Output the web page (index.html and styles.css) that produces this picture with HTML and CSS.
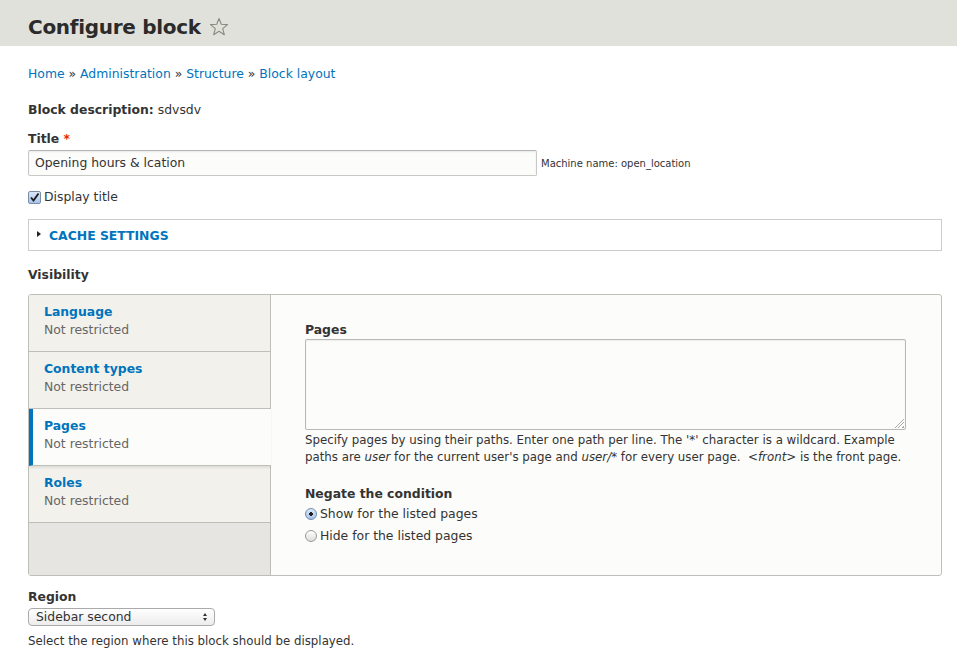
FILE: index.html
```html
<!DOCTYPE html>
<html>
<head>
<meta charset="utf-8">
<link rel="stylesheet" href="styles.css">
</head>
<body>
<header class="page-head">
  <h1 class="page-title">Configure block</h1>
  <svg class="star" width="20" height="20" viewBox="0 0 20 20"><path d="M10 1.5 L12.3 7.3 L18.5 7.6 L13.7 11.6 L15.3 17.7 L10 14.3 L4.7 17.7 L6.3 11.6 L1.5 7.6 L7.7 7.3 Z" fill="none" stroke="#8a8a80" stroke-width="1.1" stroke-linejoin="round"/></svg>
</header>
<main class="content">
  <nav class="breadcrumb"><a href="#">Home</a> » <a href="#">Administration</a> » <a href="#">Structure</a> » <a href="#">Block layout</a></nav>

  <div class="item"><span class="bold">Block description:</span> sdvsdv</div>

  <div class="field">
    <label class="label">Title <span class="req">*</span></label>
    <div class="title-row">
      <div class="text-input">Opening hours &amp; lcation</div>
      <span class="machine">Machine name: open_location</span>
    </div>
  </div>

  <div class="check-row">
    <span class="checkbox"><svg width="11" height="11" viewBox="0 0 11 11"><path d="M2 5.5 L4.5 8.5 L9.5 1.5" fill="none" stroke="#1a1a1a" stroke-width="1.8"/></svg></span>
    <span>Display title</span>
  </div>

  <div class="details">
    <span class="tri"></span><span class="summary">CACHE SETTINGS</span>
  </div>

  <div class="section-label">Visibility</div>

  <div class="vtabs">
    <ul class="vtabs-menu">
      <li class="vtab"><span class="vtab-title">Language</span><span class="vtab-sum">Not restricted</span></li>
      <li class="vtab"><span class="vtab-title">Content types</span><span class="vtab-sum">Not restricted</span></li>
      <li class="vtab selected"><span class="vtab-title">Pages</span><span class="vtab-sum">Not restricted</span></li>
      <li class="vtab"><span class="vtab-title">Roles</span><span class="vtab-sum">Not restricted</span></li>
    </ul>
    <div class="vtabs-pane">
      <div class="label">Pages</div>
      <div class="textarea"><span class="grip"></span></div>
      <div class="desc">
        <span class="line">Specify pages by using their paths. Enter one path per line. The '*' character is a wildcard. Example</span>
        <span class="line"><span>paths are </span><em>user</em><span> for the current user's page and </span><em>user/*</em><span> for every user page. &nbsp;</span><em>&lt;front&gt;</em><span> is the front page.</span></span>
      </div>
      <div class="label negate">Negate the condition</div>
      <div class="radio-row"><span class="radio on"></span>Show for the listed pages</div>
      <div class="radio-row"><span class="radio"></span>Hide for the listed pages</div>
    </div>
  </div>

  <div class="label region">Region</div>
  <div class="select">Sidebar second<span class="arrows"><span class="up"></span><span class="down"></span></span></div>
  <div class="desc region-desc">Select the region where this block should be displayed.</div>
</main>
</body>
</html>
```
FILE: styles.css
```css
html, body { margin: 0; padding: 0; }
body {
  font-family: "DejaVu Sans", Verdana, sans-serif;
  font-size: 12.4px;
  color: #333;
  background: #fff;
}
a { color: #0074bd; text-decoration: none; }
.page-head {
  background: #e1e1db;
  height: 46px;
  box-sizing: border-box;
  display: flex;
  align-items: center;
  padding: 7px 28px 0 28px;
  gap: 8px;
}
.page-title {
  margin: 0;
  font-size: 20px;
  font-weight: bold;
  color: #2b2b2b;
  letter-spacing: -0.3px;
}
.star { margin-top: 1px; }
.content { padding: 19px 15px 0 28px; }
.breadcrumb { line-height: 18px; color: #333; }
.item { margin-top: 18px; line-height: 18px; }
.bold { font-weight: bold; }
.field { margin-top: 11px; }
.label { font-weight: bold; line-height: 18px; display: block; }
.req { color: #e62600; }
.title-row { display: flex; align-items: center; gap: 4px; margin-top: 2px; }
.text-input {
  width: 509px;
  height: 26px;
  box-sizing: border-box;
  border: 1px solid #c8c8c8;
  border-top-color: #b4b4b4;
  border-radius: 2px;
  padding: 0 6px;
  line-height: 24px;
  box-shadow: inset 0 1px 2px rgba(0,0,0,.08);
  background: #fcfcfa;
}
.machine { font-size: 10px; color: #333; }
.check-row { display: flex; align-items: center; gap: 3px; margin-top: 12px; line-height: 18px; }
.checkbox {
  width: 11px; height: 11px;
  border: 1px solid #7a8ea8;
  border-radius: 2px;
  background: linear-gradient(#dbe7f7, #a9c4ea);
  display: inline-flex;
}
.details {
  margin-top: 13px;
  border: 1px solid #ccc;
  height: 30px;
  display: flex;
  align-items: center;
  padding-left: 8px;
}
.tri {
  width: 0; height: 0;
  border-left: 4px solid #222;
  border-top: 3.5px solid transparent;
  border-bottom: 3.5px solid transparent;
  margin-right: 8px;
  margin-top: -2px;
}
.summary { color: #0074bd; font-weight: bold; font-size: 12.4px; }
.section-label { font-weight: bold; margin-top: 15px; line-height: 18px; }
.vtabs {
  margin-top: 10px;
  border: 1px solid #bfbfba;
  border-radius: 3px;
  display: flex;
  background: #fcfcfa;
  height: 280px;
  overflow: hidden;
}
.vtabs-menu {
  list-style: none;
  margin: 0; padding: 0;
  width: 241px;
  flex: none;
  background: #e6e5e1;
  border-right: 1px solid #bfbfba;
}
.vtab {
  display: flex;
  flex-direction: column;
  height: 57px;
  box-sizing: border-box;
  padding: 8px 15px 0 15px;
  background: #f2f1eb;
  border-bottom: 1px solid #bfbfba;
  line-height: 18px;
}
.vtab-title { color: #0074bd; font-weight: bold; }
.vtab-sum { color: #666; }
.vtab.selected {
  background: #fcfcfa;
  border-left: 4px solid #0074bd;
  padding-left: 11px;
  margin-right: -1px;
  box-shadow: 0 2px 2px rgba(0,0,0,.08);
  position: relative;
}
.vtabs-pane { flex: 1; padding: 26px 35px 0 34px; }
.textarea {
  margin-top: 0;
  height: 89px;
  border: 1px solid #b8b8b8;
  border-radius: 2px;
  background: #fcfcfa;
  position: relative;
  box-shadow: inset 0 1px 2px rgba(0,0,0,.06);
}
.grip {
  position: absolute; right: 1px; bottom: 1px;
  width: 9px; height: 9px;
  background: linear-gradient(135deg, transparent 45%, #aaa 45%, #aaa 52%, transparent 52%, transparent 65%, #aaa 65%, #aaa 72%, transparent 72%, transparent 85%, #aaa 85%);
}
.desc { color: #333; font-size: 11.8px; line-height: 17px; margin-top: 2px; }
.desc .line { display: block; white-space: nowrap; }
.negate { margin-top: 19px; }
.radio-row { display: flex; align-items: center; gap: 3px; line-height: 22px; }
.radio {
  width: 12px; height: 12px; border-radius: 50%;
  border: 1px solid #999;
  background: linear-gradient(#fff, #ddd);
  box-sizing: border-box;
  display: inline-block;
  position: relative;
}
.radio.on {
  border-color: #6f8bb3;
  background: radial-gradient(circle, #222 0 1.6px, transparent 2px), linear-gradient(#dde8f7, #a6c2ea);
}
.region { margin-top: 12px; }
.select {
  margin-top: 2px;
  width: 187px;
  height: 18px;
  box-sizing: border-box;
  border: 1px solid #aaa;
  border-radius: 4px;
  background: linear-gradient(#fff, #ececec);
  padding: 0 7px;
  line-height: 16px;
  position: relative;
}
.arrows { position: absolute; right: 7px; top: 4px; display: flex; flex-direction: column; gap: 2px; }
.up { border-bottom: 3px solid #333; border-left: 2.5px solid transparent; border-right: 2.5px solid transparent; }
.down { border-top: 3px solid #333; border-left: 2.5px solid transparent; border-right: 2.5px solid transparent; }
.region-desc { margin-top: 7px; }
```
